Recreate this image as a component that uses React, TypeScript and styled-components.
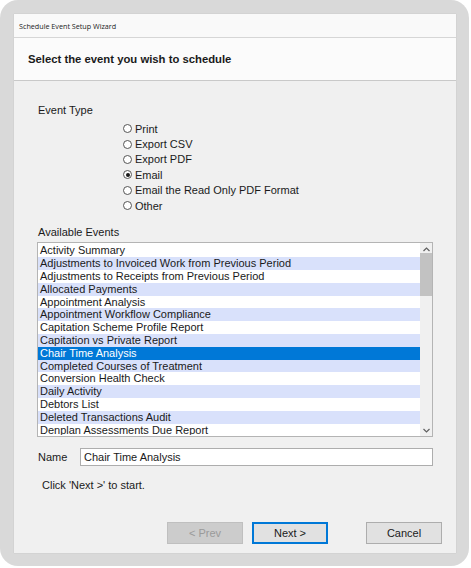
import React from "react";
import styled, { createGlobalStyle } from "styled-components";

const Global = createGlobalStyle`
  html, body { margin: 0; padding: 0; background: #ffffff; }
  body { width: 471px; height: 568px; overflow: hidden; }
  * { box-sizing: border-box; }
`;

const Frame = styled.div`
  width: 469px;
  height: 566px;
  background: #d9d9d9;
  border-radius: 18px;
  padding: 14px 13px 13px 14px;
  display: flex;
`;

const Win = styled.div`
  flex: 1;
  min-width: 0;
  display: flex;
  flex-direction: column;
  background: #f0f0f0;
  font-family: "Liberation Sans", Arial, sans-serif;
  color: #1a1a1a;
  box-shadow: 0 0 1px rgba(0,0,0,0.15);
`;

const TitleBar = styled.div`
  height: 24px;
  background: #f9f9f9;
  border-bottom: 1px solid #d6d6d6;
  display: flex;
  align-items: center;
  padding-left: 5px;
  font-family: "Open Sans", "Noto Sans", sans-serif;
  font-size: 7.2px;
  color: #222;
`;

const Header = styled.div`
  height: 43px;
  background: #fbfbfb;
  border-bottom: 1px solid #c9c9c9;
  display: flex;
  align-items: center;
  padding-left: 14px;
  font-weight: bold;
  font-size: 11.3px;
  color: #1a1a1a;
`;

const Body = styled.div`
  flex: 1;
  min-width: 0;
  display: flex;
  flex-direction: column;
  padding: 23px 23px 0 23px;
  font-size: 11px;
`;

const Label = styled.div<{ $mt?: number }>`
  line-height: 13px;
  margin-top: ${(p) => p.$mt ?? 0}px;
  padding-left: 1px;
`;

const RadioGroup = styled.div`
  display: flex;
  flex-direction: column;
  margin-top: 4px;
  padding-left: 86px;
`;

const RadioRow = styled.div`
  height: 15.4px;
  display: flex;
  align-items: center;
  gap: 3px;
`;

const RadioCircle = styled.span<{ $on?: boolean }>`
  width: 9px;
  height: 9px;
  border-radius: 50%;
  border: 1px solid #555;
  background: #fff;
  display: inline-flex;
  align-items: center;
  justify-content: center;
  &::after {
    content: "";
    width: 4px;
    height: 4px;
    border-radius: 50%;
    background: ${(p) => (p.$on ? "#1a1a1a" : "transparent")};
  }
`;

const ListBox = styled.div`
  margin-top: 3px;
  height: 195px;
  border: 1px solid #b4b4b4;
  background: #fff;
  display: flex;
  padding: 1px 0 1px 0;
`;

const Items = styled.div`
  flex: 1;
  min-width: 0;
  display: flex;
  flex-direction: column;
  overflow: hidden;
`;

const Item = styled.div<{ $alt?: boolean; $sel?: boolean }>`
  height: 12.8px;
  flex: 0 0 12.8px;
  line-height: 12.8px;
  padding-left: 2px;
  white-space: nowrap;
  background: ${(p) => (p.$sel ? "#0078d7" : p.$alt ? "#d9e1fb" : "#ffffff")};
  color: ${(p) => (p.$sel ? "#ffffff" : "#1a1a1a")};
`;

const ScrollBar = styled.div`
  width: 12px;
  display: flex;
  flex-direction: column;
  align-items: center;
  background: #f0f0f0;
  margin-top: -1px;
  margin-bottom: -1px;
`;

const Arrow = styled.div`
  height: 12px;
  width: 12px;
  display: flex;
  align-items: center;
  justify-content: center;
`;

const Track = styled.div`
  flex: 1;
  width: 100%;
`;

const Thumb = styled.div`
  margin-top: -2px;
  height: 43px;
  width: 100%;
  background: #c2c2c2;
`;

const NameRow = styled.div`
  margin-top: 11px;
  display: flex;
  align-items: center;
`;

const NameLabel = styled.div`
  width: 43px;
  padding-left: 1px;
`;

const NameInput = styled.div`
  flex: 1;
  height: 18px;
  border: 1px solid #adadad;
  background: #fff;
  display: flex;
  align-items: center;
  padding-left: 3px;
`;

const Hint = styled.div`
  margin-top: 13px;
  padding-left: 5px;
  line-height: 13px;
`;

const Buttons = styled.div`
  margin-top: 30px;
  margin-right: -9px;
  display: flex;
  justify-content: flex-end;
`;

const Btn = styled.div<{ $kind?: "disabled" | "default" | "normal"; $ml?: number }>`
  width: 76px;
  height: 22px;
  margin-left: ${(p) => p.$ml ?? 0}px;
  display: flex;
  align-items: center;
  justify-content: center;
  font-size: 11px;
  background: ${(p) => (p.$kind === "disabled" ? "#cccccc" : "#e1e1e1")};
  color: ${(p) => (p.$kind === "disabled" ? "#9a9a9a" : "#1a1a1a")};
  border: ${(p) =>
    p.$kind === "disabled" ? "1px solid #bfbfbf" : p.$kind === "default" ? "2px solid #0078d7" : "1px solid #adadad"};
`;

const radios = [
  { label: "Print" },
  { label: "Export CSV" },
  { label: "Export PDF" },
  { label: "Email", on: true },
  { label: "Email the Read Only PDF Format" },
  { label: "Other" },
];

const events = [
  "Activity Summary",
  "Adjustments to Invoiced Work from Previous Period",
  "Adjustments to Receipts from Previous Period",
  "Allocated Payments",
  "Appointment Analysis",
  "Appointment Workflow Compliance",
  "Capitation Scheme Profile Report",
  "Capitation vs Private Report",
  "Chair Time Analysis",
  "Completed Courses of Treatment",
  "Conversion Health Check",
  "Daily Activity",
  "Debtors List",
  "Deleted Transactions Audit",
  "Denplan Assessments Due Report",
];

export default function App() {
  return (
    <>
      <Global />
      <Frame>
        <Win>
          <TitleBar>Schedule Event Setup Wizard</TitleBar>
          <Header>Select the event you wish to schedule</Header>
          <Body>
            <Label>Event Type</Label>
            <RadioGroup>
              {radios.map((r) => (
                <RadioRow key={r.label}>
                  <RadioCircle $on={r.on} />
                  <span>{r.label}</span>
                </RadioRow>
              ))}
            </RadioGroup>
            <Label $mt={13}>Available Events</Label>
            <ListBox>
              <Items>
                {events.map((e, i) => (
                  <Item key={e} $alt={i % 2 === 1} $sel={e === "Chair Time Analysis"}>
                    {e}
                  </Item>
                ))}
              </Items>
              <ScrollBar>
                <Arrow>
                  <svg width="7" height="5" viewBox="0 0 7 5">
                    <path d="M0.5 4 L3.5 1 L6.5 4" fill="none" stroke="#606060" strokeWidth="1.2" />
                  </svg>
                </Arrow>
                <Track>
                  <Thumb />
                </Track>
                <Arrow>
                  <svg width="7" height="5" viewBox="0 0 7 5">
                    <path d="M0.5 1 L3.5 4 L6.5 1" fill="none" stroke="#606060" strokeWidth="1.2" />
                  </svg>
                </Arrow>
              </ScrollBar>
            </ListBox>
            <NameRow>
              <NameLabel>Name</NameLabel>
              <NameInput>Chair Time Analysis</NameInput>
            </NameRow>
            <Hint>Click 'Next &gt;' to start.</Hint>
            <Buttons>
              <Btn $kind="disabled">&lt; Prev</Btn>
              <Btn $kind="default" $ml={9}>Next &gt;</Btn>
              <Btn $kind="normal" $ml={38}>Cancel</Btn>
            </Buttons>
          </Body>
        </Win>
      </Frame>
    </>
  );
}
